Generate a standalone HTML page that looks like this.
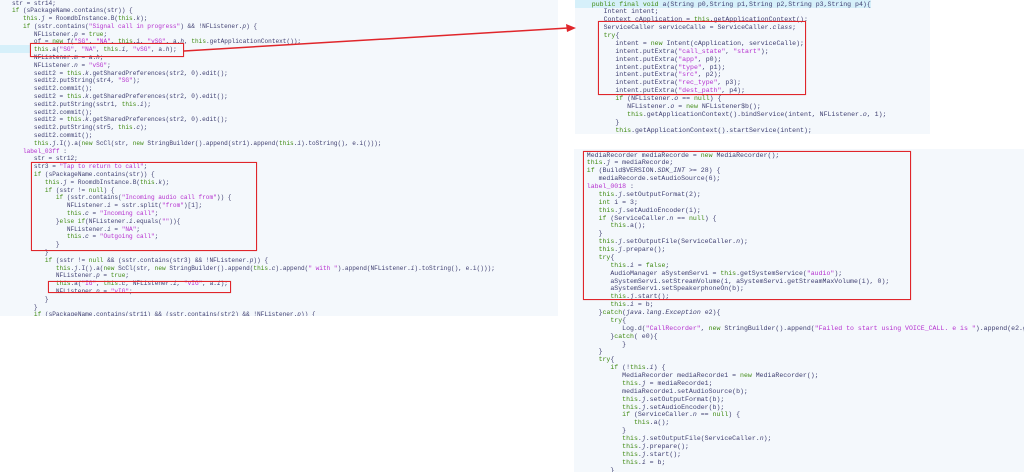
<!DOCTYPE html>
<html><head><meta charset="utf-8"><style>
html,body{margin:0;padding:0;background:#fff;width:1024px;height:472px;overflow:hidden;position:relative}
.p{position:absolute;background:#f4f8fc;overflow:hidden}
pre{margin:0;font-family:"Liberation Mono",monospace;color:#3e3e70;white-space:pre;position:absolute}
.L{font-size:6.1px;line-height:7.8px}
.R{font-size:6.55px;line-height:7.87px}
.k{color:#3f8a12}
.s{color:#b530cf}
i{font-style:italic}
.hl{position:absolute;background:#d6f0fa}
.box{position:absolute;border:1.5px solid #e0262b;box-shadow:0 0 1px rgba(200,0,0,.4)}
</style></head><body>
<div class="p" style="left:0;top:0;width:558px;height:316px">
<div class="hl" style="left:0;top:45px;width:30px;height:8px"></div>
<pre class="L" style="left:1px;top:-0.5px">   str = str14;
   <span class="k">if</span> (sPackageName.contains(str)) {
      <span class="k">this</span>.<i>j</i> = RoomdbInstance.B(<span class="k">this</span>.<i>k</i>);
      <span class="k">if</span> (sstr.contains(<span class="s">"Signal call in progress"</span>) &amp;&amp; !NFListener.<i>p</i>) {
         NFListener.<i>p</i> = <span class="k">true</span>;
         of = <span class="k">new</span> f(<span class="s">"SG"</span>, <span class="s">"NA"</span>, <span class="k">this</span>.<i>i</i>, <span class="s">"vSG"</span>, a.<i>h</i>, <span class="k">this</span>.getApplicationContext());
         <span class="k">this</span>.a(<span class="s">"SG"</span>, <span class="s">"NA"</span>, <span class="k">this</span>.<i>i</i>, <span class="s">"vSG"</span>, a.<i>h</i>);
         NFListener.<i>m</i> = a.<i>h</i>;
         NFListener.<i>n</i> = <span class="s">"vSG"</span>;
         sedit2 = <span class="k">this</span>.<i>k</i>.getSharedPreferences(str2, 0).edit();
         sedit2.putString(str4, <span class="s">"SG"</span>);
         sedit2.commit();
         sedit2 = <span class="k">this</span>.<i>k</i>.getSharedPreferences(str2, 0).edit();
         sedit2.putString(sstr1, <span class="k">this</span>.<i>i</i>);
         sedit2.commit();
         sedit2 = <span class="k">this</span>.<i>k</i>.getSharedPreferences(str2, 0).edit();
         sedit2.putString(str5, <span class="k">this</span>.<i>c</i>);
         sedit2.commit();
         <span class="k">this</span>.<i>j</i>.I().a(<span class="k">new</span> ScCl(str, <span class="k">new</span> StringBuilder().append(str1).append(<span class="k">this</span>.<i>i</i>).toString(), e.i()));
      <span class="s">label_03ff</span> :
         str = str12;
         str3 = <span class="s">"Tap to return to call"</span>;
         <span class="k">if</span> (sPackageName.contains(str)) {
            <span class="k">this</span>.<i>j</i> = RoomdbInstance.B(<span class="k">this</span>.<i>k</i>);
            <span class="k">if</span> (sstr != <span class="k">null</span>) {
               <span class="k">if</span> (sstr.contains(<span class="s">"Incoming audio call from"</span>)) {
                  NFListener.<i>i</i> = sstr.split(<span class="s">"from"</span>)[1];
                  <span class="k">this</span>.<i>c</i> = <span class="s">"Incoming call"</span>;
               }<span class="k">else if</span>(NFListener.<i>i</i>.equals(<span class="s">""</span>)){
                  NFListener.<i>i</i> = <span class="s">"NA"</span>;
                  <span class="k">this</span>.<i>c</i> = <span class="s">"Outgoing call"</span>;
               }
            }
            <span class="k">if</span> (sstr != <span class="k">null</span> &amp;&amp; (sstr.contains(str3) &amp;&amp; !NFListener.<i>p</i>)) {
               <span class="k">this</span>.<i>j</i>.I().a(<span class="k">new</span> ScCl(str, <span class="k">new</span> StringBuilder().append(<span class="k">this</span>.<i>c</i>).append(<span class="s">" with "</span>).append(NFListener.<i>i</i>).toString(), e.i()));
               NFListener.<i>p</i> = <span class="k">true</span>;
               <span class="k">this</span>.a(<span class="s">"IG"</span>, <span class="k">this</span>.<i>c</i>, NFListener.<i>i</i>, <span class="s">"vIG"</span>, a.<i>i</i>);
               NFListener.<i>n</i> = <span class="s">"vIG"</span>;
            }
         }
         <span class="k">if</span> (sPackageName.contains(str11) &amp;&amp; (sstr.contains(str2) &amp;&amp; !NFListener.<i>p</i>)) {</pre>
</div>

<div class="p" style="left:575px;top:0;width:355px;height:134px">
<div class="hl" style="left:0;top:0;width:296px;height:8px"></div>
<pre class="R" style="left:5px;top:0.5px">   <span class="k">public final void</span> a(String p0,String p1,String p2,String p3,String p4){
      Intent intent;
      Context cApplication = <span class="k">this</span>.getApplicationContext();
      ServiceCaller serviceCalle = ServiceCaller.<i>class</i>;
      <span class="k">try</span>{
         intent = <span class="k">new</span> Intent(cApplication, serviceCalle);
         intent.putExtra(<span class="s">"call_state"</span>, <span class="s">"start"</span>);
         intent.putExtra(<span class="s">"app"</span>, p0);
         intent.putExtra(<span class="s">"type"</span>, p1);
         intent.putExtra(<span class="s">"src"</span>, p2);
         intent.putExtra(<span class="s">"rec_type"</span>, p3);
         intent.putExtra(<span class="s">"dest_path"</span>, p4);
         <span class="k">if</span> (NFListener.<i>o</i> == <span class="k">null</span>) {
            NFListener.<i>o</i> = <span class="k">new</span> NFListener$b();
            <span class="k">this</span>.getApplicationContext().bindService(intent, NFListener.<i>o</i>, 1);
         }
         <span class="k">this</span>.getApplicationContext().startService(intent);</pre>
</div>

<div class="p" style="left:574px;top:149px;width:450px;height:323px">
<pre class="R" style="left:1px;top:2.5px">   MediaRecorder mediaRecorde = <span class="k">new</span> MediaRecorder();
   <span class="k">this</span>.<i>j</i> = mediaRecorde;
   <span class="k">if</span> (Build$VERSION.<i>SDK_INT</i> &gt;= 28) {
      mediaRecorde.setAudioSource(6);
   <span class="s">label_0018</span> :
      <span class="k">this</span>.<i>j</i>.setOutputFormat(2);
      <span class="k">int</span> i = 3;
      <span class="k">this</span>.<i>j</i>.setAudioEncoder(i);
      <span class="k">if</span> (ServiceCaller.<i>n</i> == <span class="k">null</span>) {
         <span class="k">this</span>.a();
      }
      <span class="k">this</span>.<i>j</i>.setOutputFile(ServiceCaller.<i>n</i>);
      <span class="k">this</span>.<i>j</i>.prepare();
      <span class="k">try</span>{
         <span class="k">this</span>.<i>i</i> = <span class="k">false</span>;
         AudioManager aSystemServi = <span class="k">this</span>.getSystemService(<span class="s">"audio"</span>);
         aSystemServi.setStreamVolume(i, aSystemServi.getStreamMaxVolume(i), 0);
         aSystemServi.setSpeakerphoneOn(b);
         <span class="k">this</span>.<i>j</i>.start();
         <span class="k">this</span>.<i>i</i> = b;
      }<span class="k">catch</span>(<i>java.lang.Exception</i> e2){
         <span class="k">try</span>{
            Log.d(<span class="s">"CallRecorder"</span>, <span class="k">new</span> StringBuilder().append(<span class="s">"Failed to start using VOICE_CALL. e is "</span>).append(e2.getMessage()).toString());
         }<span class="k">catch</span>( e0){
            }
      }
      <span class="k">try</span>{
         <span class="k">if</span> (!<span class="k">this</span>.<i>i</i>) {
            MediaRecorder mediaRecorde1 = <span class="k">new</span> MediaRecorder();
            <span class="k">this</span>.<i>j</i> = mediaRecorde1;
            mediaRecorde1.setAudioSource(b);
            <span class="k">this</span>.<i>j</i>.setOutputFormat(b);
            <span class="k">this</span>.<i>j</i>.setAudioEncoder(b);
            <span class="k">if</span> (ServiceCaller.<i>n</i> == <span class="k">null</span>) {
               <span class="k">this</span>.a();
            }
            <span class="k">this</span>.<i>j</i>.setOutputFile(ServiceCaller.<i>n</i>);
            <span class="k">this</span>.<i>j</i>.prepare();
            <span class="k">this</span>.<i>j</i>.start();
            <span class="k">this</span>.<i>i</i> = b;
         }</pre>
</div>

<div class="box" style="left:30px;top:43px;width:152px;height:12px"></div>
<div class="box" style="left:31px;top:162px;width:224px;height:87px"></div>
<div class="box" style="left:48px;top:281px;width:181px;height:10px"></div>
<div class="box" style="left:598px;top:21px;width:206px;height:72px"></div>
<div class="box" style="left:583px;top:151px;width:326px;height:147px"></div>

<svg style="position:absolute;left:0;top:0" width="1024" height="472">
<line x1="184" y1="51" x2="568" y2="28" stroke="#e0262b" stroke-width="1.5"/>
<polygon points="576,28 566,24 567,32" fill="#e0262b"/>
</svg>
</body></html>
